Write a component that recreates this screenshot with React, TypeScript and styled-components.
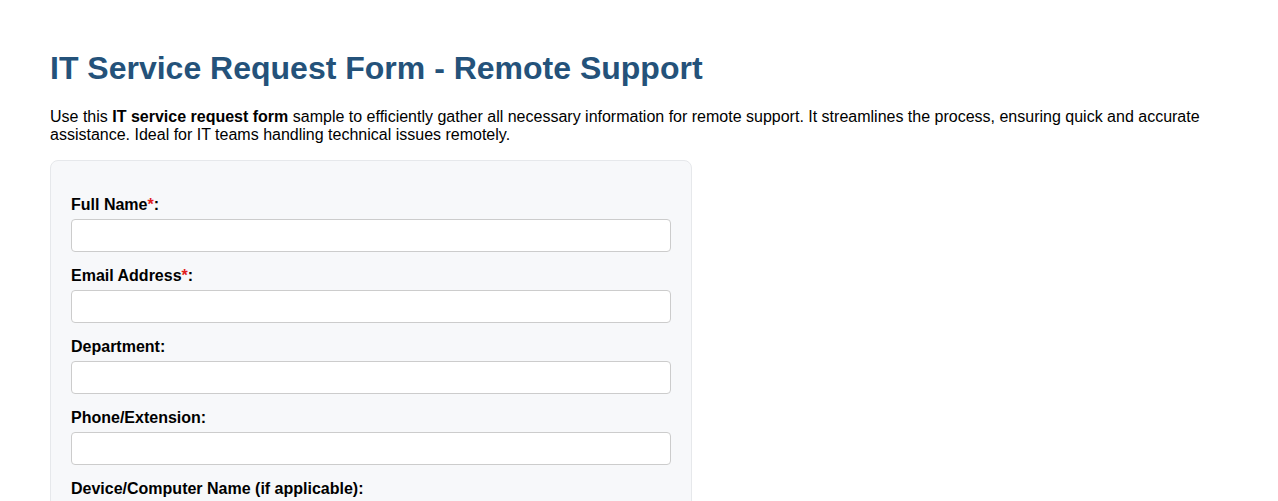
import React from "react";
import { createGlobalStyle, styled } from "styled-components";

const GlobalStyle = createGlobalStyle`
	body {
		margin: 0;
		background: #ffffff;
		font-family: "Liberation Sans", Arial, sans-serif;
		color: #000000;
	}
`;

const Page = styled.div`
	padding: 29px 50px;
`;

const Title = styled.h1`
	font-size: 32px;
	font-weight: bold;
	color: #24527a;
	margin: 21px 0;
`;

const Intro = styled.p`
	font-size: 16px;
	line-height: 18px;
	margin: 0 0 16px;
`;

const FormCard = styled.form`
	width: 600px;
	padding: 34px 20px 20px;
	background: #f7f8fa;
	border: 1px solid #e6e8eb;
	border-radius: 8px;
`;

const Field = styled.div`
	display: flex;
	flex-direction: column;
	margin-bottom: 14px;
`;

const Label = styled.label`
	font-size: 16px;
	font-weight: bold;
	line-height: 18px;
	padding-top: 1px;
	margin-bottom: 5px;
`;

const Required = styled.span`
	color: #e0201e;
`;

const TextInput = styled.input`
	box-sizing: border-box;
	width: 100%;
	height: 33px;
	padding: 6px 8px;
	font-family: inherit;
	font-size: 14px;
	background: #ffffff;
	border: 1px solid #cccccc;
	border-radius: 4px;
`;

const fields: { label: string; required?: boolean; type?: string }[] = [
	{ label: "Full Name", required: true },
	{ label: "Email Address", required: true, type: "email" },
	{ label: "Department" },
	{ label: "Phone/Extension", type: "tel" },
	{ label: "Device/Computer Name (if applicable)" },
];

export default function App() {
	return (
		<>
			<GlobalStyle />
			<Page>
				<Title>IT Service Request Form - Remote Support</Title>
				<Intro>
					Use this <strong>IT service request form</strong> sample to
					efficiently gather all necessary information for remote support. It
					streamlines the process, ensuring quick and accurate assistance.
					Ideal for IT teams handling technical issues remotely.
				</Intro>
				<FormCard onSubmit={(e) => e.preventDefault()}>
					{fields.map((f) => (
						<Field key={f.label}>
							<Label>
								{f.label}
								{f.required && <Required>*</Required>}:
							</Label>
							<TextInput type={f.type ?? "text"} />
						</Field>
					))}
				</FormCard>
			</Page>
		</>
	);
}
